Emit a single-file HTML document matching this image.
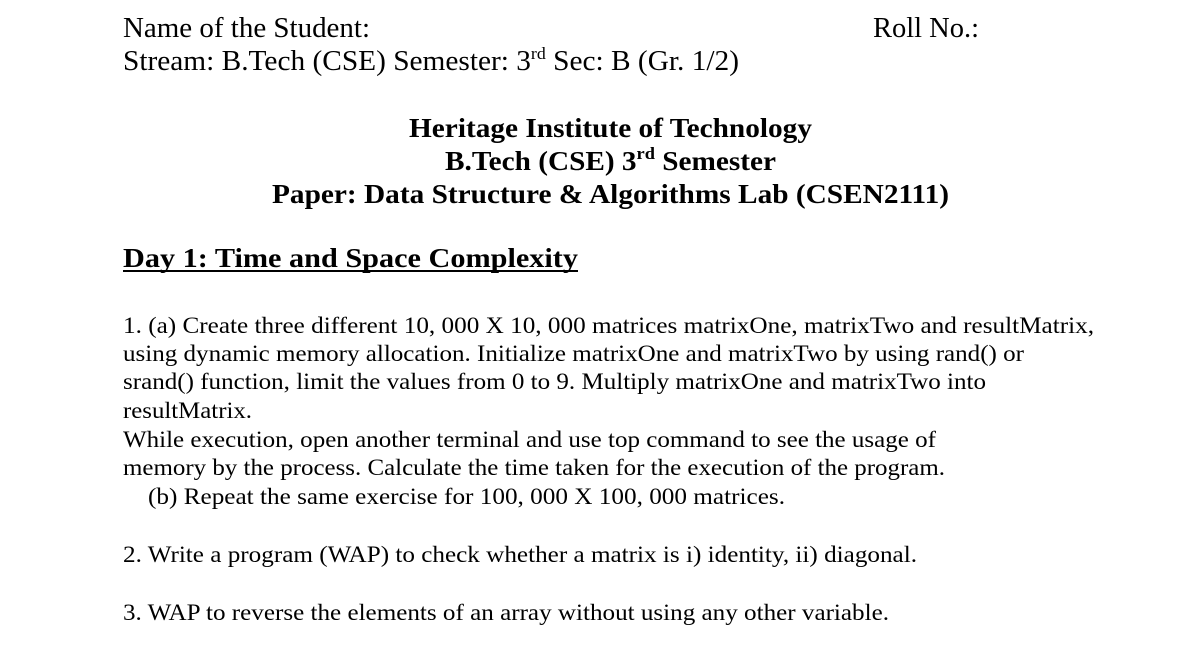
<!DOCTYPE html>
<html><head><meta charset="utf-8"><style>
html,body{margin:0;padding:0;background:#fff;}
svg{display:block}
text{font-family:"Liberation Serif",serif;fill:#000}
.b{font-weight:bold}
</style></head><body>
<svg width="1198" height="667" viewBox="0 0 1198 667" xmlns="http://www.w3.org/2000/svg">
<text x="123" y="37" font-size="28" textLength="247" lengthAdjust="spacingAndGlyphs">Name of the Student:</text>
<text x="873" y="37" font-size="28" textLength="106" lengthAdjust="spacingAndGlyphs">Roll No.:</text>
<text x="123" y="70" font-size="28" textLength="616" lengthAdjust="spacingAndGlyphs">Stream: B.Tech (CSE) Semester: 3<tspan font-size="17" dy="-11">rd</tspan><tspan dy="11"> Sec: B (Gr. 1/2)</tspan></text>

<text class="b" x="409" y="137" font-size="27" textLength="403" lengthAdjust="spacingAndGlyphs">Heritage Institute of Technology</text>
<text class="b" x="445" y="170" font-size="27" textLength="331" lengthAdjust="spacingAndGlyphs">B.Tech (CSE) 3<tspan font-size="17" dy="-11">rd</tspan><tspan dy="11"> Semester</tspan></text>
<text class="b" x="272" y="203" font-size="27" textLength="677" lengthAdjust="spacingAndGlyphs">Paper: Data Structure &amp; Algorithms Lab (CSEN2111)</text>

<text class="b" x="123" y="267" font-size="27" textLength="455" lengthAdjust="spacingAndGlyphs">Day 1: Time and Space Complexity</text>
<rect x="123" y="270" width="455" height="2" fill="#000"/>

<g font-size="23">
<text x="123" y="333" textLength="971" lengthAdjust="spacingAndGlyphs">1. (a)  Create three different 10, 000 X 10, 000 matrices matrixOne, matrixTwo and resultMatrix,</text>
<text x="123" y="361" textLength="901" lengthAdjust="spacingAndGlyphs">using dynamic memory allocation. Initialize matrixOne and matrixTwo by using rand() or</text>
<text x="123" y="389" textLength="863" lengthAdjust="spacingAndGlyphs">srand() function, limit the values from 0 to 9. Multiply matrixOne and matrixTwo into</text>
<text x="123" y="418" textLength="129" lengthAdjust="spacingAndGlyphs">resultMatrix.</text>
<text x="123" y="447" textLength="813" lengthAdjust="spacingAndGlyphs">While execution, open another terminal and use top command to see the usage of</text>
<text x="123" y="475" textLength="822" lengthAdjust="spacingAndGlyphs">memory by the process. Calculate the time taken for the execution of the program.</text>
<text x="148" y="504" textLength="637" lengthAdjust="spacingAndGlyphs">(b) Repeat the same exercise for 100, 000  X 100, 000 matrices.</text>
<text x="123" y="562" textLength="794" lengthAdjust="spacingAndGlyphs">2. Write a program (WAP) to check whether a matrix is i) identity, ii) diagonal.</text>
<text x="123" y="620" textLength="766" lengthAdjust="spacingAndGlyphs">3. WAP to reverse the elements of an array without using any other variable.</text>
</g>
</svg>
</body></html>
